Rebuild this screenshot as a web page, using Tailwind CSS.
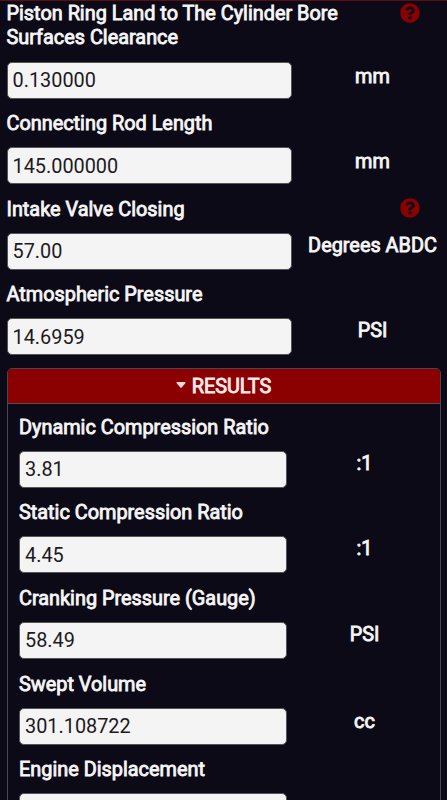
<!DOCTYPE html>
<html lang="en">
<head>
    <meta charset="UTF-8">
    <meta name="viewport" content="width=device-width, initial-scale=1.0">
    <title>Compression Ratio Calculator</title>
    <script src="https://cdn.jsdelivr.net/npm/@tailwindcss/browser@4"></script>
    <style>
        body { font-family: Roboto, "Liberation Sans", sans-serif; }
        .strong { -webkit-text-stroke: 0.85px currentColor; }
    </style>
</head>
<body class="bg-[#0d0a17] text-[#f5f5f5] text-[19.88px] leading-[25.5px] h-[800px] overflow-hidden border-t border-[#5c0d14]">
    <form class="px-[6.5px]">
        <!-- Inputs -->
        <div class="h-[110px]">
            <div class="flex justify-between">
                <label class="strong w-[350px] pt-px leading-6">Piston Ring Land to The Cylinder Bore Surfaces Clearance</label>
                <svg class="w-5 h-5 mt-[2px] mr-[20.5px]" viewBox="0 0 512 512" fill="#8b0000"><path d="M504 256c0 137-111 248-248 248S8 393 8 256 119 8 256 8s248 111 248 248zM262.700 90c-54.500 0-89.200 23-116.500 63.800-3.500 5.300-2.400 12.400 2.700 16.300l34.700 26.300c5.200 3.900 12.600 3 16.700-2.100 17.900-22.700 30.100-35.800 57.300-35.800 20.400 0 45.700 13.100 45.700 33 0 15-12.400 22.700-32.500 34C247.100 238.500 216 254.900 216 296v4c0 6.600 5.400 12 12 12h56c6.600 0 12-5.400 12-12v-1.300c0-28.500 83.200-29.600 83.200-106.700 0-58-60.200-102-116.500-102zM256 338c-25.400 0-46 20.600-46 46 0 25.400 20.600 46 46 46s46-20.600 46-46c0-25.400-20.600-46-46-46z"/></svg>
            </div>
            <div class="flex justify-between pt-[11.5px]">
                <input class="w-[285px] h-[37px] px-[5px] pt-px rounded-[5px] border border-[#555] bg-[#f4f4f4] text-[#1c1a22]" value="0.130000">
                <span class="strong w-[136px] pt-0.5 text-center">mm</span>
            </div>
        </div>
        <div class="h-[85.6px]">
            <label class="strong block">Connecting Rod Length</label>
            <div class="flex justify-between pt-[10.5px]">
                <input class="w-[285px] h-[37px] px-[5px] pt-px rounded-[5px] border border-[#555] bg-[#f4f4f4] text-[#1c1a22]" value="145.000000">
                <span class="strong w-[136px] pt-0.5 text-center">mm</span>
            </div>
        </div>
        <div class="h-[85.6px]">
            <div class="flex justify-between">
                <label class="strong">Intake Valve Closing</label>
                <svg class="w-5 h-5 mt-[1px] mr-[20.5px]" viewBox="0 0 512 512" fill="#8b0000"><path d="M504 256c0 137-111 248-248 248S8 393 8 256 119 8 256 8s248 111 248 248zM262.700 90c-54.500 0-89.200 23-116.500 63.800-3.500 5.300-2.400 12.400 2.700 16.300l34.700 26.300c5.200 3.900 12.600 3 16.700-2.100 17.900-22.700 30.100-35.800 57.300-35.800 20.400 0 45.700 13.100 45.700 33 0 15-12.400 22.700-32.500 34C247.100 238.500 216 254.900 216 296v4c0 6.600 5.400 12 12 12h56c6.600 0 12-5.400 12-12v-1.300c0-28.500 83.200-29.600 83.200-106.700 0-58-60.200-102-116.500-102zM256 338c-25.400 0-46 20.600-46 46 0 25.400 20.600 46 46 46s46-20.600 46-46c0-25.400-20.600-46-46-46z"/></svg>
            </div>
            <div class="flex justify-between pt-[10.5px]">
                <input class="w-[285px] h-[37px] px-[5px] pt-px rounded-[5px] border border-[#555] bg-[#f4f4f4] text-[#1c1a22]" value="57.00">
                <span class="strong w-[136px] text-center whitespace-nowrap">Degrees ABDC</span>
            </div>
        </div>
        <div class="h-[85.6px]">
            <label class="strong block">Atmospheric Pressure</label>
            <div class="flex justify-between pt-[10.5px]">
                <input class="w-[285px] h-[37px] px-[5px] pt-px rounded-[5px] border border-[#555] bg-[#f4f4f4] text-[#1c1a22]" value="14.6959">
                <span class="strong w-[136px] text-center">PSI</span>
            </div>
        </div>

        <!-- Results -->
        <div class="border border-[#4a4650] rounded-[5px] overflow-hidden">
            <div class="flex items-center justify-center gap-1.5 h-[35px] bg-[#8b0000] border-b border-[#5a4a50]">
                <svg class="w-2.5 h-1.5 -mt-0.5" viewBox="0 0 10 6" fill="#f5d6d6"><path d="M1 0h8q1 .3.500 1L5.500 5.700q-.5.300-1 0L.500 1Q0 .3 1 0z"/></svg>
                <span class="strong pt-px text-[#fbeaea]">RESULTS</span>
            </div>
            <div class="px-[11.500px] pt-[11px]">
                <div class="h-[85.6px]">
                    <label class="strong block">Dynamic Compression Ratio</label>
                    <div class="flex justify-between pt-[10.5px]">
                        <input class="w-[268px] h-[37px] px-[5px] rounded-[5px] border border-[#555] bg-[#f4f4f4] text-[#1c1a22]" value="3.81">
                        <span class="strong w-[127px] text-center">:1</span>
                    </div>
                </div>
                <div class="h-[85.6px]">
                    <label class="strong block">Static Compression Ratio</label>
                    <div class="flex justify-between pt-[10.5px]">
                        <input class="w-[268px] h-[37px] px-[5px] pt-px rounded-[5px] border border-[#555] bg-[#f4f4f4] text-[#1c1a22]" value="4.45">
                        <span class="strong w-[127px] text-center">:1</span>
                    </div>
                </div>
                <div class="h-[85.6px]">
                    <label class="strong block">Cranking Pressure (Gauge)</label>
                    <div class="flex justify-between pt-[10.5px]">
                        <input class="w-[268px] h-[37px] px-[5px] rounded-[5px] border border-[#555] bg-[#f4f4f4] text-[#1c1a22]" value="58.49">
                        <span class="strong w-[127px] text-center">PSI</span>
                    </div>
                </div>
                <div class="h-[85.6px]">
                    <label class="strong block">Swept Volume</label>
                    <div class="flex justify-between pt-[10.5px]">
                        <input class="w-[268px] h-[37px] px-[5px] rounded-[5px] border border-[#555] bg-[#f4f4f4] text-[#1c1a22]" value="301.108722">
                        <span class="strong w-[127px] pt-px text-center">cc</span>
                    </div>
                </div>
                <div class="h-[85.6px]">
                    <label class="strong block">Engine Displacement</label>
                    <div class="flex justify-between pt-[10.5px]">
                        <input class="w-[268px] h-[37px] px-[5px] rounded-[5px] border border-[#555] bg-[#f4f4f4] text-[#1c1a22]" value="">
                    </div>
                </div>
            </div>
        </div>
    </form>
</body>
</html>
